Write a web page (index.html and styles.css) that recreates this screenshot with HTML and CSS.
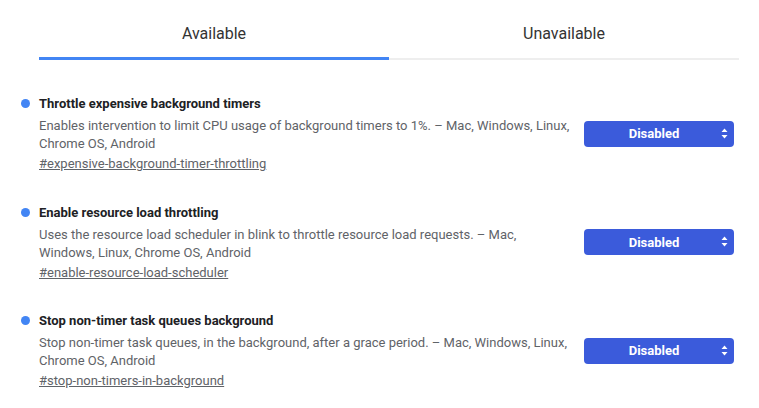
FILE: index.html
```html
<!DOCTYPE html>
<html>
<head>
<meta charset="utf-8">
<link rel="stylesheet" href="styles.css">
</head>
<body>
<div class="page">
  <div class="tabs">
    <div class="tab active">Available</div>
    <div class="tab">Unavailable</div>
  </div>
  <div class="list">
    <div class="row">
      <div class="info">
        <div class="title"><span class="dot"></span>Throttle expensive background timers</div>
        <div class="desc">Enables intervention to limit CPU usage of background timers to 1%. – Mac, Windows, Linux, Chrome OS, Android</div>
        <a class="link">#expensive-background-timer-throttling</a>
      </div>
      <div class="select"><span>Disabled</span><svg class="arrows" width="7" height="11" viewBox="0 0 7 11"><path d="M3.5 0.5 L6.5 4 H0.5 Z M3.5 10.5 L6.5 7 H0.5 Z" fill="#fff"/></svg></div>
    </div>
    <div class="row">
      <div class="info">
        <div class="title"><span class="dot"></span>Enable resource load throttling</div>
        <div class="desc">Uses the resource load scheduler in blink to throttle resource load requests. – Mac, Windows, Linux, Chrome OS, Android</div>
        <a class="link">#enable-resource-load-scheduler</a>
      </div>
      <div class="select"><span>Disabled</span><svg class="arrows" width="7" height="11" viewBox="0 0 7 11"><path d="M3.5 0.5 L6.5 4 H0.5 Z M3.5 10.5 L6.5 7 H0.5 Z" fill="#fff"/></svg></div>
    </div>
    <div class="row">
      <div class="info">
        <div class="title"><span class="dot"></span>Stop non-timer task queues background</div>
        <div class="desc">Stop non-timer task queues, in the background, after a grace period. – Mac, Windows, Linux, Chrome OS, Android</div>
        <a class="link">#stop-non-timers-in-background</a>
      </div>
      <div class="select"><span>Disabled</span><svg class="arrows" width="7" height="11" viewBox="0 0 7 11"><path d="M3.5 0.5 L6.5 4 H0.5 Z M3.5 10.5 L6.5 7 H0.5 Z" fill="#fff"/></svg></div>
    </div>
  </div>
</div>
</body>
</html>
```
FILE: styles.css
```css
html, body {
  margin: 0;
  padding: 0;
  background: #fff;
}
body {
  font-family: Roboto, "Liberation Sans", Arial, sans-serif;
  color: #202124;
}
.page {
  width: 700px;
  margin-left: 39px;
}
.tabs {
  display: flex;
  height: 60px;
}
.tab {
  flex: 1;
  text-align: center;
  font-size: 16px;
  color: #333;
  padding-top: 24px;
  box-sizing: border-box;
  border-bottom: 2px solid #eeeeee;
  height: 60px;
}
.tab.active {
  border-bottom: 3px solid #4285f4;
}
.list {
  padding-top: 34px;
  display: flex;
  flex-direction: column;
  gap: 29.5px;
}
.row {
  display: flex;
  align-items: center;
  justify-content: space-between;
}
.info {
  width: 535px;
  font-size: 13px;
}
.title {
  position: relative;
  font-weight: bold;
  line-height: 20px;
  color: #202124;
  margin-bottom: 3px;
}
.dot {
  position: absolute;
  left: -18px;
  top: 5px;
  width: 9px;
  height: 9px;
  border-radius: 50%;
  background: #4285f4;
}
.desc {
  color: #5f6368;
  line-height: 18px;
}
.link {
  display: block;
  color: #5f6368;
  text-decoration: underline;
  line-height: 19px;
  margin-top: 1px;
}
.select {
  position: relative;
  width: 150px;
  height: 26px;
  margin-right: 5px;
  background: #3b5bdb;
  border-radius: 4px;
  color: #fff;
  font-weight: bold;
  font-size: 13px;
  display: flex;
  align-items: center;
  justify-content: center;
  padding-right: 10px;
  box-sizing: border-box;
}
.arrows {
  position: absolute;
  right: 6px;
  top: 7px;
}
```
